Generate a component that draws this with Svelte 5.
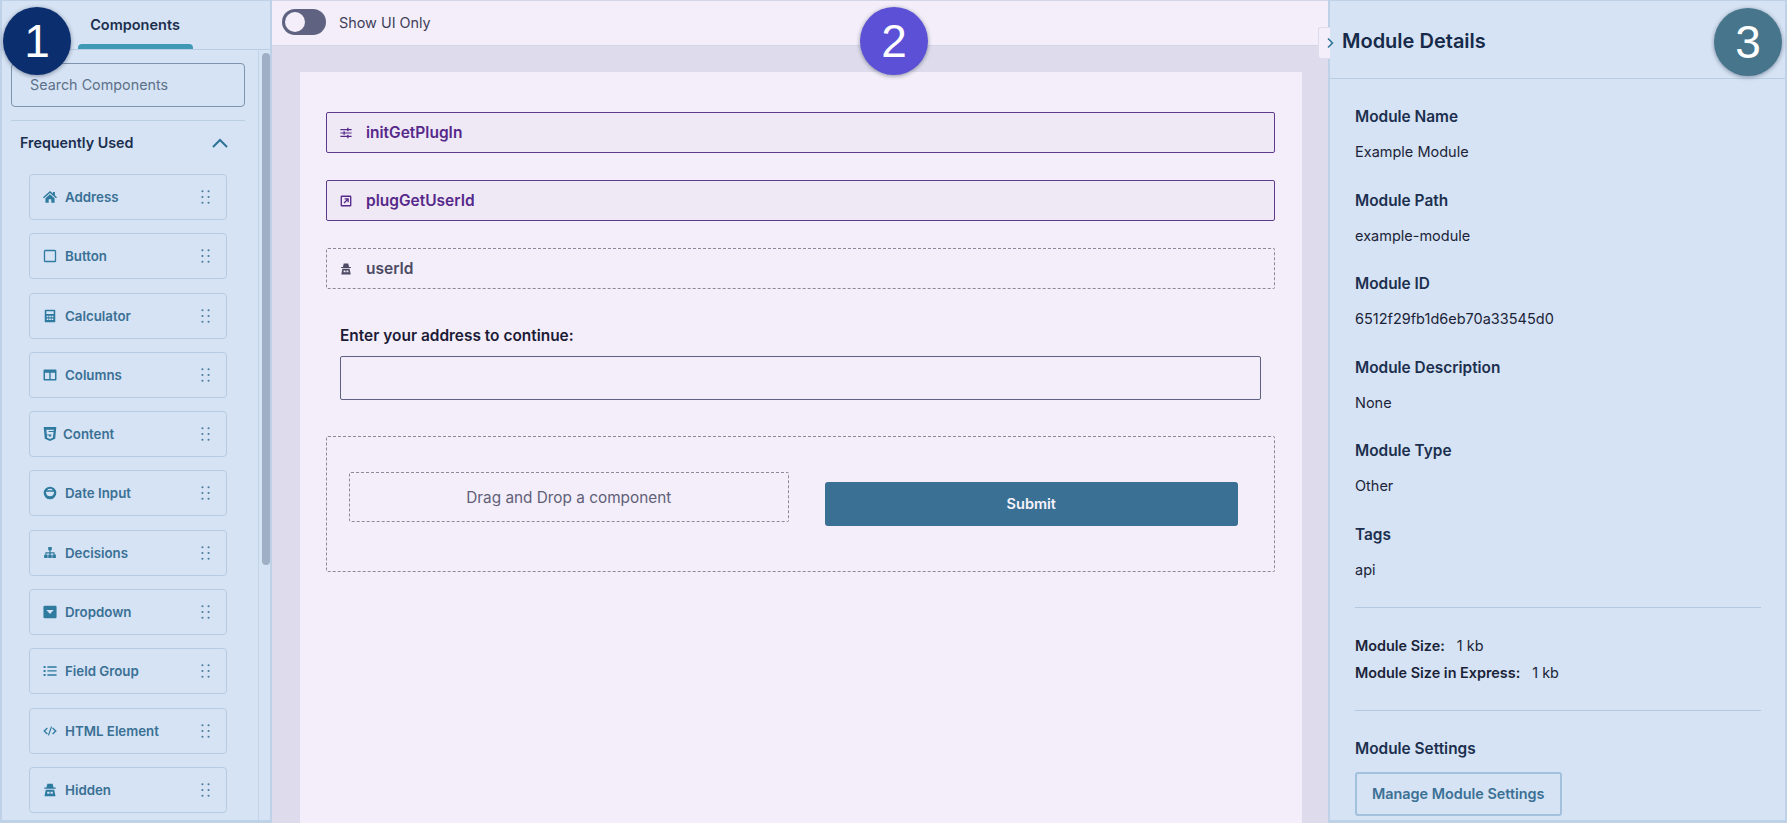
<script>
  const components = [
    { name: 'Address', icon: 'home' },
    { name: 'Button', icon: 'square' },
    { name: 'Calculator', icon: 'calc' },
    { name: 'Columns', icon: 'columns' },
    { name: 'Content', icon: 'html5' },
    { name: 'Date Input', icon: 'date' },
    { name: 'Decisions', icon: 'sitemap' },
    { name: 'Dropdown', icon: 'dropdown' },
    { name: 'Field Group', icon: 'list' },
    { name: 'HTML Element', icon: 'code' },
    { name: 'Hidden', icon: 'spy' }
  ];

  const details = [
    { label: 'Module Name', value: 'Example Module' },
    { label: 'Module Path', value: 'example-module' },
    { label: 'Module ID', value: '6512f29fb1d6eb70a33545d0' },
    { label: 'Module Description', value: 'None' },
    { label: 'Module Type', value: 'Other' },
    { label: 'Tags', value: 'api' }
  ];
</script>

{#snippet glyph(name)}
  <svg class="glyph" viewBox="0 0 16 16" fill="currentColor" aria-hidden="true">
    {#if name === 'home'}
      <path d="M8 1.200 0 8.200l1.100 1.200L8 3.400l6.900 6 1.100-1.200-2.400-2.100V2.200h-2.200v1.900z" />
      <path d="M8 4.800 2.800 9.300v5.200h3.700v-3.800h3v3.800h3.700V9.300z" />
    {:else if name === 'square'}
      <rect x="1.700" y="1.700" width="12.600" height="12.600" rx="1" fill="none" stroke="currentColor" stroke-width="1.500" />
    {:else if name === 'calc'}
      <path fill-rule="evenodd" d="M3 .8h10a1 1 0 0 1 1 1v12.400a1 1 0 0 1-1 1H3a1 1 0 0 1-1-1V1.800a1 1 0 0 1 1-1zM3.800 2.600v3h8.400v-3zM4.200 7.600v1.700h2V7.600zM7 7.600v1.700h2V7.600zM9.800 7.600v1.700h2V7.600zM4.200 10.800v1.900h2v-1.900zM7 10.800v1.900h2v-1.900zM9.800 10.800v1.900h2v-1.900z" />
    {:else if name === 'columns'}
      <path fill-rule="evenodd" d="M1.600 1.800h12.800a1 1 0 0 1 1 1v10.400a1 1 0 0 1-1 1H1.600a1 1 0 0 1-1-1V2.800a1 1 0 0 1 1-1zM2.300 5.400v7.100h4.900V5.400zM8.800 5.400v7.100h4.900V5.400z" />
    {:else if name === 'html5'}
      <path fill-rule="evenodd" d="M.8 0h14.400l-1.300 13.400L8 16l-5.900-2.600zM3.800 3l.5 5.600h5.300l-.2 2-1.400.6-1.400-.6-.1-1.100H4.500l.2 2.700L8 13.600l3.300-1.400.7-6.600H6.500l-.1-1h5.800l.2-1.600z" />
    {:else if name === 'date'}
      <path fill-rule="evenodd" d="M8 .8a7.200 7.200 0 1 1 0 14.400A7.200 7.200 0 0 1 8 .8zM4.600 4.800h6.800A4.600 4.600 0 0 0 8 3.200 4.600 4.600 0 0 0 4.600 4.800zM3.500 6.600a4.600 4.600 0 0 0 0 1.400 4.600 4.600 0 0 0 9 0 4.600 4.600 0 0 0 0-1.400z" />
    {:else if name === 'sitemap'}
      <path d="M6 1.200h4v3.600H8.700v2.400h4.600v2.600h1.400v3.800h-4V10h1.400V8.600H8.700V10H10v3.600H6V10h1.300V8.600H3.900V10h1.400v3.800h-4V10h1.400V7.200h4.600V4.800H6z" />
    {:else if name === 'dropdown'}
      <path fill-rule="evenodd" d="M2 .8h12A1.500 1.500 0 0 1 15.500 2.300v11.400a1.500 1.500 0 0 1-1.500 1.500H2A1.500 1.500 0 0 1 .5 13.700V2.300A1.500 1.500 0 0 1 2 .8zM3.800 5.800 8 10.400l4.200-4.600z" />
    {:else if name === 'list'}
      <path d="M5 2.700h10.500v1.500H5zM5 7.200h10.500v1.500H5zM5 11.800h10.500v1.500H5zM.7 2.400h2.200v2.200H.7zM.7 6.900h2.200v2.200H.7zM.7 11.400h2.200v2.200H.7z" />
    {:else if name === 'code'}
      <path d="M4.500 4 5.500 5.100 2.500 8l3 2.900-1 1.100L.3 8zM11.500 4l-1 1.100 3 2.900-3 2.900 1 1.100L15.700 8zM9.100 2.800l1.300.4-3.500 10-1.300-.4z" />
    {:else if name === 'spy'}
      <path fill-rule="evenodd" d="M5 .8h6l1.100 4.400h2.400v1.500h-13V5.200h2.400zM3.200 7.800h9.600l1.500 7.400H1.700zM4.800 10v2.200h2.600V10zM8.600 10v2.200h2.600V10z" />
    {:else if name === 'sliders'}
      <path d="M.5 2.600h15v1.600H.5zM.5 7.200h15v1.600H.5zM.5 11.800h15v1.600H.5z" />
      <path d="M9.600 1h1.800v4.800H9.600zM4.600 5.600h1.800v4.800H4.600zM9.600 10.200h1.800V15H9.600z" />
    {:else if name === 'external'}
      <path fill-rule="evenodd" d="M2.500 .8h11a1.700 1.700 0 0 1 1.700 1.700v11a1.700 1.700 0 0 1-1.700 1.700h-11A1.700 1.700 0 0 1 .8 13.500v-11A1.700 1.700 0 0 1 2.500 .8zM2.600 2.600v10.800h10.800V2.600zM6.200 4.300h5.500v5.500H10V7.200l-4 4-1.200-1.200 4-4H6.200z" />
    {/if}
  </svg>
{/snippet}

{#snippet dots()}
  <svg class="dots" viewBox="0 0 10 16" fill="currentColor" aria-hidden="true">
    {#each [1.500, 8, 14.500] as y}
      <circle cx="1.500" cy={y} r="1.200" />
      <circle cx="8.500" cy={y} r="1.200" />
    {/each}
  </svg>
{/snippet}

<div class="page">
  <aside class="palette">
    <div class="tabs">
      <div class="tab">Components</div>
    </div>
    <div class="palette-body">
      <div class="palette-scroll">
        <input class="search" placeholder="Search Components" />
        <div class="group-head">
          <span>Frequently Used</span>
          <svg class="chevron" viewBox="0 0 18 12" fill="none" stroke="currentColor" stroke-width="2" aria-hidden="true">
            <path d="M2 10 9 3l7 7" />
          </svg>
        </div>
        <ul class="component-list">
          {#each components as item}
            <li class="component">
              <span class="component-icon">{@render glyph(item.icon)}</span>
              <span class="component-name" class:tight={item.icon === 'html5'}>{item.name}</span>
              {@render dots()}
            </li>
          {/each}
        </ul>
      </div>
      <div class="scrollbar"><div class="thumb"></div></div>
    </div>
  </aside>

  <main class="editor">
    <div class="toolbar">
      <span class="toggle"><span class="knob"></span></span>
      <span class="toggle-label">Show UI Only</span>
    </div>
    <div class="canvas">
      <div class="sheet">
        <div class="row plugin">{@render glyph('sliders')}<span>initGetPlugIn</span></div>
        <div class="row plugin">{@render glyph('external')}<span>plugGetUserId</span></div>
        <div class="row hidden-row">{@render glyph('spy')}<span>userId</span></div>

        <div class="address">
          <label for="address">Enter your address to continue:</label>
          <input id="address" class="address-input" />
        </div>

        <div class="columns">
          <div class="drop-slot"><div class="drop-target">Drag and Drop a component</div></div>
          <div class="submit-slot"><button class="submit">Submit</button></div>
        </div>
      </div>
    </div>
  </main>

  <aside class="details">
    <header class="details-head">Module Details</header>
    <div class="details-body">
      {#each details as item}
        <div class="field">
          <div class="field-label">{item.label}</div>
          <div class="field-value">{item.value}</div>
        </div>
      {/each}
      <hr class="first" />
      <div class="sizes">
        <div><strong>Module Size:</strong><span>1 kb</span></div>
        <div><strong>Module Size in Express:</strong><span>1 kb</span></div>
      </div>
      <hr />
      <div class="field-label settings">Module Settings</div>
      <button class="manage">Manage Module Settings</button>
    </div>
  </aside>

  <div class="collapse">
    <svg viewBox="0 0 8 12" fill="none" stroke="currentColor" stroke-width="1.500" aria-hidden="true"><path d="M2 1.500 6.500 6 2 10.500" /></svg>
  </div>

  <div class="badge one">1</div>
  <div class="badge two">2</div>
  <div class="badge three">3</div>
</div>

<style>
  :global(body) {
    margin: 0;
    background: #f3eef9;
  }

  .page {
    position: relative;
    display: grid;
    grid-template-columns: 272px 1fr 459px;
    height: 823px;
    overflow: hidden;
    font-family: Inter, 'Liberation Sans', sans-serif;
    color: #1c2f4e;
  }

  /* left column */
  .palette {
    display: flex;
    flex-direction: column;
    min-height: 0;
    background: #d5e3f4;
    border: 1px solid #bfd1e6;
    border-width: 1px 2px 3px 2px;
    box-sizing: border-box;
  }

  .tabs {
    display: flex;
    justify-content: center;
    height: 49px;
    box-sizing: border-box;
    border-bottom: 1px solid #b9cde3;
    padding-right: 2px;
  }

  .tab {
    position: relative;
    width: 115px;
    box-sizing: border-box;
    padding-top: 15px;
    text-align: center;
    font-size: 14.500px;
    line-height: 17px;
    font-weight: 600;
    color: #1c2f4e;
  }

  .tab::after {
    content: '';
    position: absolute;
    left: 0;
    right: 0;
    bottom: 0;
    height: 5px;
    background: #3f98b5;
    border-radius: 4px 4px 0 0;
  }

  .palette-body {
    flex: 1;
    display: flex;
    min-height: 0;
  }

  .palette-scroll {
    flex: 1;
    min-width: 0;
    overflow: hidden;
    padding: 13px 13px 0 9px;
    border-right: 1px solid #c2d4e8;
  }

  .search {
    display: block;
    width: 100%;
    height: 44px;
    box-sizing: border-box;
    padding: 0 18px 2px;
    background: #d5e3f4;
    border: 1px solid #7d94ae;
    border-radius: 4px;
    font: 400 14.350px Inter, sans-serif;
    color: #5d7189;
    outline: none;
  }

  .search::placeholder {
    color: #5d7189;
    opacity: 1;
  }

  .group-head {
    display: flex;
    align-items: center;
    justify-content: space-between;
    margin-top: 13px;
    height: 44px;
    box-sizing: content-box;
    padding: 0 16px 0 9px;
    border-top: 1px solid #b9cde3;
    font-size: 14.300px;
    font-weight: 600;
    color: #1c2f4e;
  }

  .group-head span {
    margin-top: -2px;
  }

  .chevron {
    width: 18px;
    height: 12px;
    color: #2c7396;
  }

  .component-list {
    list-style: none;
    margin: 9px 0 0;
    padding: 0 18px;
    display: flex;
    flex-direction: column;
    gap: 13.300px;
  }

  .component {
    display: flex;
    align-items: center;
    height: 46px;
    box-sizing: border-box;
    padding: 0 16px 0 13px;
    border: 1.500px solid #b7cce3;
    border-radius: 4px;
    font-size: 13.300px;
    font-weight: 600;
    color: #3a7094;
  }

  .component-icon {
    display: flex;
    width: 22px;
    color: #2f7a9f;
  }

  .component-name {
    flex: 1;
    white-space: nowrap;
  }

  .component-name.tight {
    margin-left: -2px;
  }

  .glyph {
    width: 14px;
    height: 14px;
    flex: none;
  }

  .dots {
    width: 9px;
    height: 14px;
    flex: none;
    color: #4c7b9b;
  }

  .scrollbar {
    width: 11px;
    padding: 3px 0 0 3px;
    box-sizing: border-box;
    flex: none;
  }

  .thumb {
    height: 512px;
    width: 8px;
    border-radius: 4px;
    background: #9fb0c6;
  }

  /* center column */
  .editor {
    display: flex;
    flex-direction: column;
    min-width: 0;
    background: #dedcec;
  }

  .toolbar {
    display: flex;
    align-items: center;
    gap: 13px;
    height: 46px;
    flex: none;
    box-sizing: border-box;
    padding: 0 10px 2px;
    background: #f3eef9;
    border-top: 1px solid #d3d6e6;
    border-bottom: 1px solid #d3d6e6;
  }

  .toggle {
    display: flex;
    align-items: center;
    width: 44px;
    height: 26px;
    box-sizing: border-box;
    padding: 0 3px;
    border-radius: 13px;
    background: #5f6280;
  }

  .knob {
    width: 20px;
    height: 20px;
    border-radius: 50%;
    background: #f3eef9;
  }

  .toggle-label {
    font-size: 14.400px;
    color: #403e58;
  }

  .canvas {
    flex: 1;
    min-height: 0;
    overflow: hidden;
    padding: 26px 26px 0 28px;
  }

  .sheet {
    height: 100%;
    box-sizing: border-box;
    padding: 40px 27px 0 26px;
    background: #f3eef9;
  }

  .row {
    display: flex;
    align-items: center;
    gap: 14px;
    height: 41px;
    box-sizing: border-box;
    padding: 0 13px;
    margin-bottom: 27px;
    border-radius: 2px;
    font-size: 15.500px;
    font-weight: 600;
  }

  .row .glyph {
    width: 12px;
    height: 12px;
  }

  .plugin {
    background: #efe9f6;
    border: 1px solid #5f3a8c;
    color: #56288a;
  }

  .hidden-row {
    border: 1px dashed #8c8a9a;
    color: #4d4a63;
  }

  .address {
    padding: 0 14px;
    margin-top: 38px;
  }

  .address label {
    display: block;
    font-size: 15.450px;
    line-height: 17px;
    font-weight: 600;
    color: #1d1b36;
    margin-bottom: 12px;
  }

  .address-input {
    display: block;
    width: 100%;
    height: 44px;
    box-sizing: border-box;
    background: #f3eef9;
    border: 1px solid #5f6280;
    border-radius: 2px;
    outline: none;
  }

  .columns {
    display: grid;
    grid-template-columns: 1fr 1fr;
    height: 136px;
    margin-top: 36px;
    box-sizing: border-box;
    border: 1px dashed #8c8a9a;
    border-radius: 2px;
  }

  .drop-slot {
    padding: 35px 12px 0 22px;
  }

  .drop-target {
    display: flex;
    align-items: center;
    justify-content: center;
    height: 50px;
    box-sizing: border-box;
    border: 1px dashed #8c8a9a;
    border-radius: 2px;
    font-size: 15.350px;
    color: #615f78;
  }

  .submit-slot {
    padding: 45px 36px 0 24px;
  }

  .submit {
    display: block;
    width: 100%;
    height: 44px;
    padding: 0 0 2px;
    border: none;
    border-radius: 3px;
    background: #3a7094;
    color: #f6f3fb;
    font: 600 14.500px Inter, sans-serif;
  }

  /* right column */
  .details {
    min-height: 0;
    background: #d5e3f4;
    border: 1px solid #bfd1e6;
    border-width: 1px 2px 3px 2px;
    box-sizing: border-box;
  }

  .details-head {
    display: flex;
    align-items: center;
    height: 78px;
    box-sizing: border-box;
    padding: 2px 0 0 12px;
    border-bottom: 1px solid #b9cde3;
    font-size: 20px;
    font-weight: 600;
    color: #172a4a;
  }

  .details-body {
    padding: 28px 24px 0 25px;
  }

  .field {
    height: 83.600px;
  }

  .field-label {
    font-size: 15.400px;
    line-height: 20px;
    font-weight: 600;
    color: #1c2f4e;
  }

  .field-value {
    margin-top: 15px;
    font-size: 14.500px;
    line-height: 20px;
    color: #1c2338;
  }

  hr {
    margin: 0;
    border: none;
    border-top: 1px solid #b4c9e0;
  }

  hr.first {
    margin-top: -2px;
  }

  .sizes {
    padding: 24px 0 24px;
    font-size: 14.400px;
    line-height: 27px;
    color: #1c2338;
  }

  .sizes strong {
    font-weight: 600;
    margin-right: 12px;
  }

  .settings {
    margin-top: 28px;
  }

  .manage {
    display: block;
    margin-top: 13px;
    height: 44px;
    padding: 0 15px;
    background: transparent;
    border: 2px solid #a3c0dc;
    border-radius: 3px;
    color: #3a7094;
    font: 600 14.400px Inter, sans-serif;
  }

  /* overlays */
  .collapse {
    position: absolute;
    left: 1318px;
    top: 27px;
    width: 11px;
    height: 30px;
    display: flex;
    align-items: center;
    justify-content: flex-end;
    background: #f3eef9;
    border: 1px solid #dcdcec;
    border-right: none;
    border-radius: 3px 0 0 3px;
    color: #2c7396;
  }

  .collapse svg {
    width: 8px;
    height: 12px;
    margin-right: -4px;
  }

  .badge {
    position: absolute;
    width: 68px;
    height: 68px;
    display: flex;
    align-items: center;
    justify-content: center;
    border-radius: 50%;
    box-shadow: 0 1px 4px rgba(20, 30, 60, 0.45);
    color: #fff;
    font-family: 'Liberation Sans', Arial, sans-serif;
    font-size: 46px;
    line-height: 1;
  }

  .one {
    left: 3px;
    top: 7px;
    background: #0b2e6f;
  }

  .two {
    left: 860px;
    top: 7px;
    background: #5b50d6;
  }

  .three {
    left: 1714px;
    top: 8px;
    background: #46758c;
  }
</style>
